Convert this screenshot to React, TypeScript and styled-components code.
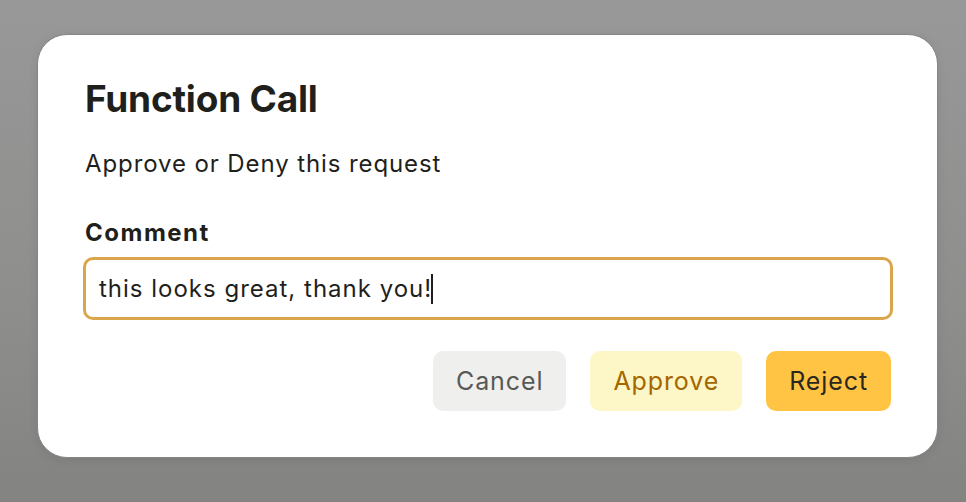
import React from 'react';
import styled, { createGlobalStyle } from 'styled-components';

const GlobalStyle = createGlobalStyle`
  html, body {
    margin: 0;
    padding: 0;
  }
  body {
    font-family: Inter, "Noto Sans", "Liberation Sans", sans-serif;
    -webkit-font-smoothing: antialiased;
  }
`;

const Backdrop = styled.div`
  width: 966px;
  height: 502px;
  box-sizing: border-box;
  padding: 34px 28px 44px 37px;
  background: linear-gradient(180deg, #989898 0%, #8e8e8d 60%, #838381 100%);
  display: flex;
  align-items: flex-start;
`;

const Dialog = styled.div`
  width: 901px;
  height: 424px;
  box-sizing: border-box;
  background: #ffffff;
  border: 1px solid #858585;
  border-radius: 30px;
  padding: 42px 46px 0 47px;
  display: flex;
  flex-direction: column;
  box-shadow: 0 2px 10px rgba(0, 0, 0, 0.08);
`;

const Title = styled.h2`
  margin: 0;
  font-size: 37px;
  line-height: 44px;
  font-weight: 700;
  color: #1f1f1c;
  letter-spacing: -0.2px;
`;

const Subtitle = styled.p`
  margin: 28px 0 0;
  font-size: 24px;
  line-height: 30px;
  color: #1f1f1c;
  letter-spacing: 0.9px;
`;

const Label = styled.label`
  margin-top: 39px;
  font-size: 24px;
  line-height: 30px;
  font-weight: 700;
  color: #1f1f1c;
  letter-spacing: 1.5px;
`;

const Field = styled.div`
  margin: 9px -2px 0;
  height: 63px;
  box-sizing: border-box;
  border: 3px solid #dba64b;
  border-radius: 10px;
  display: flex;
  align-items: center;
  padding: 0 13px;
  font-size: 24px;
  letter-spacing: 1px;
  color: #1f1f1c;
`;

const Caret = styled.span`
  display: inline-block;
  width: 2px;
  height: 30px;
  background: #1f1f1c;
  margin-left: -1px;
`;

const Actions = styled.div`
  margin-top: 31px;
  display: flex;
  justify-content: flex-end;
  gap: 24px;
`;

const tones = {
  neutral: { bg: '#efefee', fg: '#595956' },
  soft: { bg: '#fdf6c7', fg: '#a46600' },
  solid: { bg: '#ffc444', fg: '#2a2720' },
};

const Button = styled.button<{ $tone: keyof typeof tones }>`
  height: 60px;
  border: none;
  border-radius: 10px;
  padding: 0 23px;
  font-family: inherit;
  font-size: 25px;
  letter-spacing: 0.9px;
  background: ${({ $tone }) => tones[$tone].bg};
  color: ${({ $tone }) => tones[$tone].fg};
  cursor: pointer;
`;

export default function App() {
  return (
    <>
      <GlobalStyle />
      <Backdrop>
        <Dialog>
          <Title>Function Call</Title>
          <Subtitle>Approve or Deny this request</Subtitle>
          <Label>Comment</Label>
          <Field>
            this looks great, thank you!
            <Caret />
          </Field>
          <Actions>
            <Button $tone="neutral">Cancel</Button>
            <Button $tone="soft">Approve</Button>
            <Button $tone="solid">Reject</Button>
          </Actions>
        </Dialog>
      </Backdrop>
    </>
  );
}
